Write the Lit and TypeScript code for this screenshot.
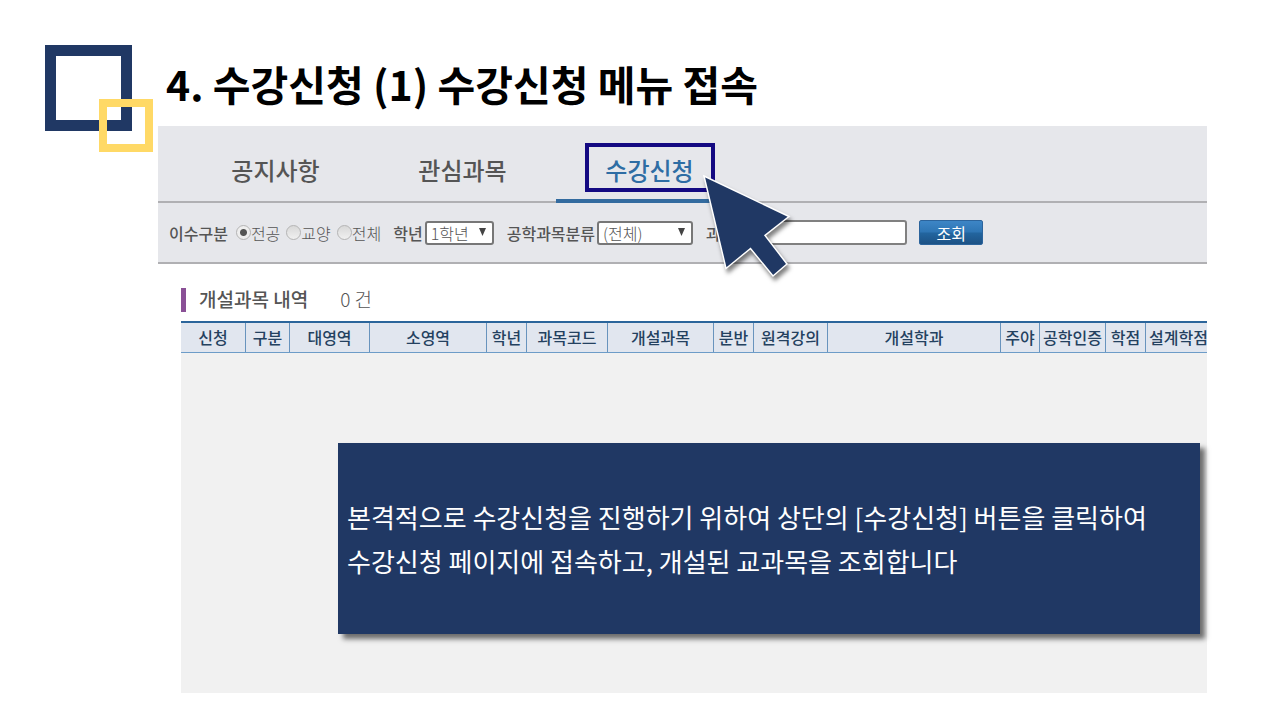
import { LitElement, html, css } from "lit";
import { customElement, state } from "lit/decorators.js";

const TABS = ["공지사항", "관심과목", "수강신청"];

const CATEGORIES = ["전공", "교양", "전체"];

const COLUMNS: Array<[string, number]> = [
  ["신청", 65],
  ["구분", 44],
  ["대영역", 80],
  ["소영역", 117],
  ["학년", 40],
  ["과목코드", 81],
  ["개설과목", 106],
  ["분반", 40],
  ["원격강의", 74],
  ["개설학과", 173],
  ["주야", 39],
  ["공학인증", 66],
  ["학점", 40],
  ["설계학점", 66],
];

@customElement("app-root")
export class AppRoot extends LitElement {
  @state() private tab = "수강신청";

  static styles = css`
    :host {
      display: flex;
      flex-direction: column;
      box-sizing: border-box;
      min-height: 100vh;
      padding: 45px 73px 27px 45px;
      background: #fff;
      color: #555;
      font-family: "Noto Sans CJK KR", sans-serif;
      font-size: 16px;
      line-height: 24px;
    }
    *,
    *::after {
      box-sizing: border-box;
    }
    button,
    input,
    select {
      font: inherit;
      color: inherit;
      margin: 0;
    }
    .heading {
      display: flex;
      align-items: center;
      gap: 34px;
      margin-bottom: -5px;
    }
    .logo {
      position: relative;
      flex: none;
      width: 87px;
      height: 86px;
      border: 11px solid #203864;
    }
    .logo::after {
      content: "";
      position: absolute;
      left: 43px;
      top: 43px;
      width: 54px;
      height: 53px;
      border: 8px solid #ffd966;
    }
    h1 {
      margin: 0;
      padding-bottom: 10px;
      font-size: 41px;
      line-height: 56px;
      font-weight: 700;
      color: #000;
    }
    .screen {
      flex: 1;
      display: flex;
      flex-direction: column;
      margin-left: 113px;
    }
    .tabs {
      display: flex;
      height: 77px;
      padding-left: 24px;
      background: #e6e7eb;
      border-bottom: 2px solid #b0b0b3;
    }
    .tab {
      position: relative;
      width: 187px;
      height: 77px;
      padding: 14px 0 0;
      border: 0;
      border-bottom: 4px solid transparent;
      background: none;
      font-size: 24px;
      line-height: 36px;
      font-weight: 500;
    }
    .tab.active {
      color: #2e6da4;
      border-bottom-color: #336b9f;
    }
    .marker {
      position: absolute;
      left: 29px;
      top: 17px;
      width: 130px;
      height: 49px;
      border: 4px solid #140a82;
    }
    .pointer {
      position: absolute;
      z-index: 2;
      left: 144px;
      top: 46px;
      width: 96px;
      height: 112px;
      filter: drop-shadow(2px 4px 2px rgba(0, 0, 0, 0.5));
      pointer-events: none;
    }
    .filters {
      display: flex;
      align-items: center;
      height: 61px;
      padding-left: 11px;
      background: #e6e7eb;
      border-bottom: 2px solid #b0b0b3;
      white-space: nowrap;
    }
    .name {
      font-weight: 500;
    }
    .radios {
      display: flex;
      gap: 6px;
      margin: 0 12px 0 8px;
    }
    .radio {
      display: flex;
      align-items: center;
    }
    .radio input {
      appearance: none;
      width: 15px;
      height: 15px;
      border: 1px solid #b4b4b4;
      border-radius: 50%;
      background: linear-gradient(#d8d8d8, #f0f0f0);
    }
    .radio input:checked {
      background: radial-gradient(circle, #555 0 3px, #eee 4px);
    }
    .light {
      font-weight: 300;
    }
    .pick {
      position: relative;
      margin: 0 13px 0 2px;
    }
    .pick select {
      display: block;
      appearance: none;
      width: 69px;
      height: 24px;
      padding: 0 4px;
      border: 2px solid #777;
      border-radius: 3px;
      background: #fff;
      line-height: 20px;
      font-weight: 300;
    }
    .pick.wide select {
      width: 96px;
    }
    .pick svg {
      position: absolute;
      right: 8px;
      top: 7px;
      width: 7px;
      height: 8px;
      fill: #444;
      pointer-events: none;
    }
    .query {
      width: 155px;
      height: 25px;
      margin: 0 12px 0 2px;
      border: 2px solid #808080;
      border-radius: 3px;
      background: #fff;
    }
    .search {
      width: 64px;
      height: 25px;
      padding: 0;
      border: 1px solid #2c649c;
      border-radius: 2px;
      background: linear-gradient(#3d86c6, #2e75b4 48%, #22659f 52%, #1d5285);
      color: #fff;
      line-height: 22px;
    }
    .caption {
      display: flex;
      align-items: center;
      gap: 32px;
      margin: 24px 0 9px 23px;
      font-size: 19px;
    }
    .caption > * {
      padding-bottom: 2px;
      line-height: 22px;
    }
    h2 {
      margin: 0;
      padding-left: 13px;
      border-left: 5px solid #8a5096;
      font-size: 19px;
      font-weight: 500;
    }
    .results {
      position: relative;
      flex: 1;
      margin-left: 23px;
      background: #f1f1f1;
    }
    .scroll {
      overflow: hidden;
    }
    table {
      width: 100%;
      min-width: 1031px;
      table-layout: fixed;
      border-collapse: separate;
      border-spacing: 0;
      border-top: 2px solid #2b659b;
      border-bottom: 1px solid #6d9cc8;
      background: #e1e6ef;
    }
    th {
      height: 29px;
      padding: 0 0 2px;
      border-right: 1px solid #6893bd;
      color: #24415f;
      font-weight: 500;
      white-space: nowrap;
    }
    .note {
      position: absolute;
      left: 157px;
      right: 7px;
      top: 122px;
      display: flex;
      align-items: center;
      min-height: 191px;
      padding: 0 9px;
      background: #203864;
      box-shadow: 5px 5px 5px rgba(0, 0, 0, 0.55);
      color: #fff;
      font-size: 26px;
      line-height: 44px;
      font-weight: 400;
    }
    .note p {
      margin: 0;
    }
  `;

  private arrow() {
    return html`<svg viewBox="0 0 7 8" aria-hidden="true"><path d="M0 0H7L3.5 8Z" /></svg>`;
  }

  render() {
    return html`
      <header class="heading">
        <div class="logo"></div>
        <h1>4. 수강신청 (1) 수강신청 메뉴 접속</h1>
      </header>
      <main class="screen">
        <nav class="tabs">
          ${TABS.map(
            (t) => html`<button
              class="tab ${t === this.tab ? "active" : ""}"
              @click=${() => (this.tab = t)}
            >
              ${t}
              ${t === "수강신청"
                ? html`<span class="marker"></span>
                    <svg class="pointer" viewBox="0 0 96 112" aria-hidden="true">
                      <path
                        d="M4 4 L89 44.5 L65 63.5 L87 92 L73 104 L50.5 76.5 L26 96.5 Z"
                        fill="#203864"
                        stroke="#fff"
                        stroke-width="1.5"
                      />
                    </svg>`
                : ""}
            </button>`
          )}
        </nav>
        <form class="filters" @submit=${(e: Event) => e.preventDefault()}>
          <span class="name" id="category">이수구분</span>
          <div class="radios" role="radiogroup" aria-labelledby="category">
            ${CATEGORIES.map(
              (c, i) => html`<label class="radio"
                ><input type="radio" name="category" ?checked=${i === 0} /><span class="light">${c}</span></label
              >`
            )}
          </div>
          <label class="name" for="grade">학년</label>
          <div class="pick">
            <select id="grade"><option>1학년</option></select>${this.arrow()}
          </div>
          <label class="name" for="field">공학과목분류</label>
          <div class="pick wide">
            <select id="field"><option>(전체)</option></select>${this.arrow()}
          </div>
          <label class="name" for="query">과목명</label>
          <input class="query" id="query" type="text" />
          <button class="search">조회</button>
        </form>
        <div class="caption">
          <h2>개설과목 내역</h2>
          <span class="light">0 건</span>
        </div>
        <section class="results">
          <div class="scroll">
            <table>
              <colgroup>
                ${COLUMNS.map(([, w]) => html`<col style="width:${w}px" />`)}
              </colgroup>
              <thead>
                <tr>
                  ${COLUMNS.map(([name]) => html`<th scope="col">${name}</th>`)}
                </tr>
              </thead>
            </table>
          </div>
          <aside class="note">
            <p>
              본격적으로 수강신청을 진행하기 위하여 상단의 [수강신청] 버튼을 클릭하여<br />수강신청 페이지에 접속하고,
              개설된 교과목을 조회합니다
            </p>
          </aside>
        </section>
      </main>
    `;
  }
}
